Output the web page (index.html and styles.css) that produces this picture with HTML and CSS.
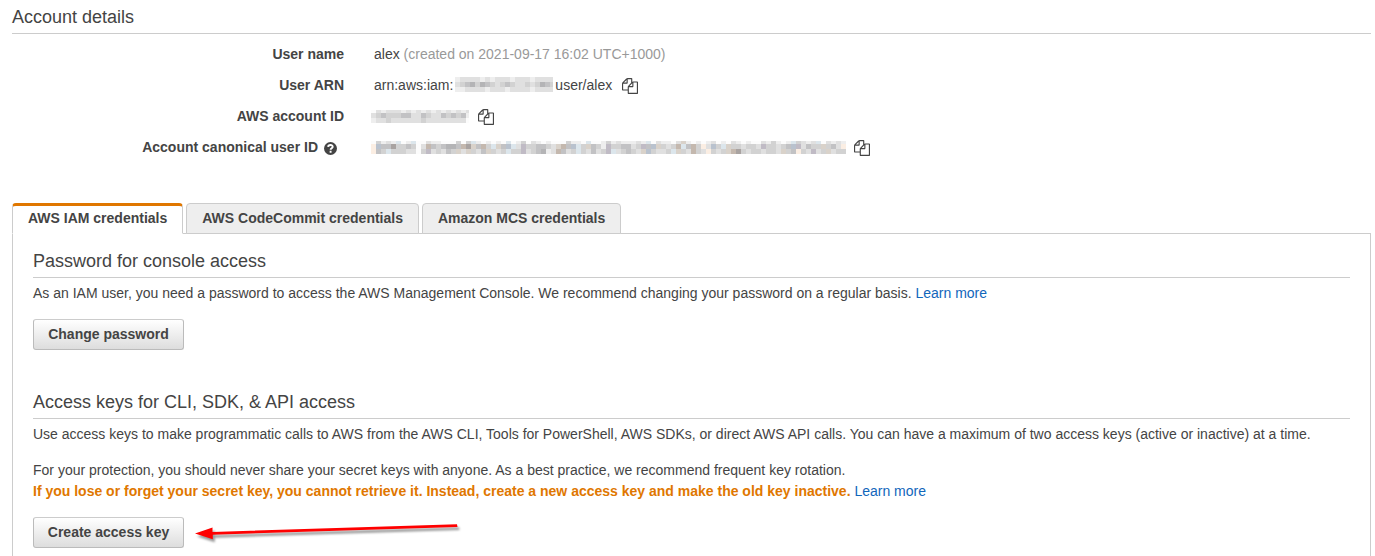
FILE: index.html
```html
<!DOCTYPE html>
<html lang="en">
<head>
<meta charset="utf-8">
<title>Account details</title>
<link rel="stylesheet" href="styles.css">
</head>
<body>
<svg class="defs" aria-hidden="true">
  <symbol id="copy" viewBox="0 0 1792 1792">
    <path fill="#444" d="M1696 384q40 0 68 28t28 68v1216q0 40-28 68t-68 28h-960q-40 0-68-28t-28-68v-288h-544q-40 0-68-28t-28-68v-672q0-40 20-88t48-76l408-408q28-28 76-48t88-20h416q40 0 68 28t28 68v328q68-40 128-40h416zm-544 213l-299 299h299v-299zm-640-384l-299 299h299v-299zm196 647l316-316v-416h-384v416q0 40-28 68t-68 28h-416v640h512v-256q0-40 20-88t48-76zm956 804v-1152h-384v416q0 40-28 68t-68 28h-416v640h896z"/>
  </symbol>
</svg>
<main class="page">
  <h2 class="heading">Account details</h2>
  <dl class="details">
    <dt>User name</dt>
    <dd>alex&nbsp;<span class="muted">(created on 2021-09-17 16:02 UTC+1000)</span></dd>
    <dt>User ARN</dt>
    <dd>arn:aws:iam:<span class="mosaic arn" data-mosaic="arn"></span>user/alex<svg class="copy"><use href="#copy"/></svg></dd>
    <dt>AWS account ID</dt>
    <dd><span class="mosaic account" data-mosaic="account"></span><svg class="copy"><use href="#copy"/></svg></dd>
    <dt>Account canonical user ID
      <svg class="help" viewBox="0 0 13 13"><circle cx="6.500" cy="6.500" r="6.500" fill="#444"/><path d="M4.100 4.900C4.300 2.300 8.900 2.500 8.700 4.900 8.600 6.300 6.600 6.200 6.600 7.800M6.600 8.800v2" fill="none" stroke="#fff" stroke-width="1.900"/></svg>
    </dt>
    <dd><span class="mosaic canonical" data-mosaic="canonical"></span><svg class="copy"><use href="#copy"/></svg></dd>
  </dl>
  <nav class="tabs">
    <a class="tab active">AWS IAM credentials</a>
    <a class="tab">AWS CodeCommit credentials</a>
    <a class="tab">Amazon MCS credentials</a>
  </nav>
  <section class="panel">
    <h2 class="heading">Password for console access</h2>
    <p>As an IAM user, you need a password to access the AWS Management Console. We recommend changing your password on a regular basis. <a class="link">Learn more</a></p>
    <button class="button">Change password</button>
    <h2 class="heading second">Access keys for CLI, SDK, &amp; API access</h2>
    <p>Use access keys to make programmatic calls to AWS from the AWS CLI, Tools for PowerShell, AWS SDKs, or direct AWS API calls. You can have a maximum of two access keys (active or inactive) at a time.</p>
    <p class="protection">For your protection, you should never share your secret keys with anyone. As a best practice, we recommend frequent key rotation.<br><strong class="warning">If you lose or forget your secret key, you cannot retrieve it. Instead, create a new access key and make the old key inactive.</strong> <a class="link">Learn more</a></p>
    <div class="action">
      <button class="button">Create access key</button>
      <svg class="arrow" viewBox="0 0 280 40"><path d="M9 20.500 26.500 14.500V18.900L271 11.300 271.500 14 26.800 21.700V26.200z" fill="#f00"/></svg>
    </div>
  </section>
</main>
<script src="mosaic.js"></script>
</body>
</html>
```
FILE: styles.css
```css
* { box-sizing: border-box; }
body { margin: 0; background: #fff; color: #444; font: 14px/21px "Liberation Sans", Arial, sans-serif; }
.defs { display: none; }
.page { height: 556px; padding: 3px 4px 0 12px; overflow: hidden; display: flex; flex-direction: column; }
.heading { margin: 0; height: 31px; border-bottom: 1px solid #ccc; font-size: 18px; font-weight: 400; line-height: 29px; flex: none; }
.details { margin: 5px 0 0; display: grid; grid-template-columns: 332px 1fr; column-gap: 30px; grid-auto-rows: 31px; }
dt { display: flex; align-items: center; justify-content: flex-end; font-weight: 700; }
dd { margin: 0; display: flex; align-items: center; }
.muted { color: #999; }
.help { width: 13px; height: 13px; margin: 1px 7px 0 6px; }
.copy { width: 16px; height: 16px; margin: 1px 0 0 10px; }
.mosaic { display: flex; }
.mosaic svg { display: block; }
.arn { margin: -2px 2px 0 2px; }
.account { margin: -1px -1px 0 -3px; }
.canonical { margin: -1px -2px 0 -3px; }
.tabs { display: flex; gap: 3px; margin-top: 40px; height: 31px; flex: none; position: relative; z-index: 1; }
.tab { height: 31px; padding: 4px 15px 0; border: 1px solid #ccc; border-radius: 4px 4px 0 0; background: #eee; font-weight: 700; }
.tab.active { border-top: 3px solid #e07700; border-bottom-color: #fff; background: #fff; padding-top: 2px; }
.panel { margin-top: -1px; flex: 1 0 340px; border: 1px solid #ccc; border-bottom: 0; padding: 13px 20px 0; }
.panel p { margin: 5px 0 0; white-space: nowrap; }
.link { color: #1166bb; }
.button { display: block; width: 151px; height: 31px; margin-top: 15px; padding: 0; border: 1px solid #bbb; border-top-color: #ccc; border-radius: 3px; background: linear-gradient(#fff, #ddd); color: #444; font: 700 14px/21px "Liberation Sans", Arial, sans-serif; }
.second { margin-top: 38px; }
.panel .protection { margin-top: 15px; }
.warning { color: #e07700; }
.action { display: flex; height: 46px; }
.arrow { width: 280px; height: 40px; margin: 11px 0 0 2px; filter: drop-shadow(2px 3px 1px #0006); }
```
FILE: mosaic.js
```js
// Redaction blocks: each row is a height and one colour key per 5px cell.
const tones = {
  f: "#fcfcfc", e: "#eeeeee", d: "#e0e0e0", c: "#d2d2d2", b: "#c2c2c4", a: "#b4b4b6",
  p: "#fbeee3", t: "#c4b8ae", s: "#b9c2ce", l: "#dce6ec", w: "#d9d2ca", v: "#c0bbc5", n: "#a9a3a1"
};
const mosaics = {
  arn: { width: 98, rows: [[5, "eddddededddedddedddd"], [5, "dcbacabcdcbcddcdcabc"], [5, "eeddddedddeddddedddd"]] },
  account: { width: 98, rows: [[3, "fdedddededededededed"], [5, "dcbcccbbddbcddbcbcbe"], [5, "eddcddddddcddddddddf"]] },
  canonical: { width: 475, rows: [
    [3, "fcedelfelffdeefffcfclefefeflfecfdefefffceeflffecedeeedelfdeefdwefefedfefdefeffdecefelcdedlfdedel"],
    [5, "psbbnccbcfdtbcbaabtnwbtclwbsldvccbbcdwtbslcwbcevccbbdcvbswcdctlbtcpdsclwccdccdvccdcbsvdbccwcbdpf"],
    [5, "pbclcccddfcvdcdbcwdwcdbwcdclccvdcbaedtbdclcdbdcvldcbcdwscddclwcdtcdpcdcwtncdccdccdwcbpcdvdcwdccf"]] }
};
document.querySelectorAll("[data-mosaic]").forEach(el => {
  const { width, rows } = mosaics[el.dataset.mosaic];
  let y = 0, rects = "";
  rows.forEach(([h, row]) => {
    [...row].forEach((key, i) => { rects += `<rect x="${i * 5}" y="${y}" width="5" height="${h}" fill="${tones[key]}"/>`; });
    y += h;
  });
  el.innerHTML = `<svg width="${width}" height="${y}" shape-rendering="crispEdges">${rects}</svg>`;
});
```
